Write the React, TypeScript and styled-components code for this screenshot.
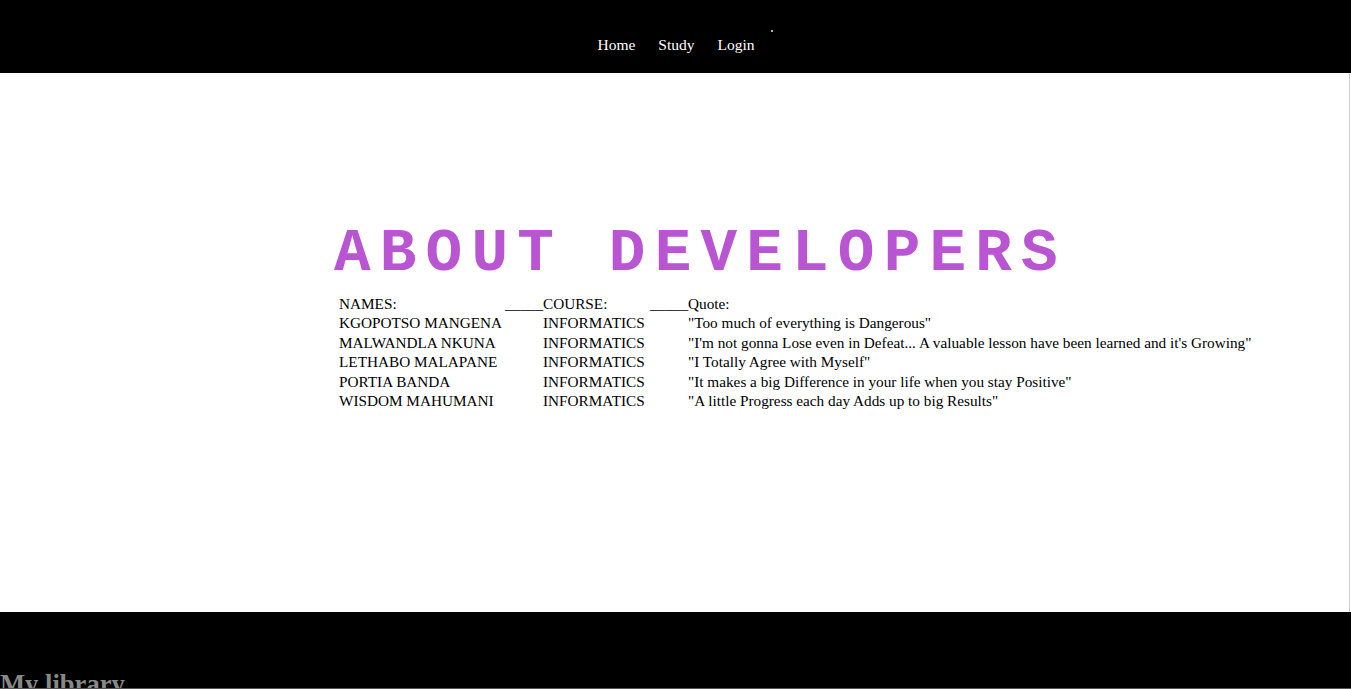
import React from "react";
import styled, { createGlobalStyle } from "styled-components";

const Global = createGlobalStyle`
  html, body { margin: 0; padding: 0; background: #fff; }
  body { font-family: "Liberation Serif", "Times New Roman", serif; font-size: 16px; overflow: hidden; }
`;

const Page = styled.div`
  display: flex;
  flex-direction: column;
  width: 1351px;
  height: 689px;
  overflow: hidden;
`;

const NavBar = styled.nav`
  height: 73px;
  background: #000;
  display: flex;
  justify-content: center;
  align-items: center;
  flex-shrink: 0;
  position: relative;
`;

const NavList = styled.div`
  display: flex;
  gap: 23px;
  padding-top: 16px;
  margin-left: 1px;
`;

const NavLink = styled.a`
  color: #fff;
  text-decoration: none;
  font-size: 15.5px;
  font-family: "Liberation Serif", serif;
`;

const Dot = styled.span`
  position: absolute;
  left: 771px;
  top: 30px;
  width: 2px;
  height: 2px;
  background: #aaa;
`;

const Main = styled.main`
  height: 539px;
  flex-shrink: 0;
  border-right: 1px solid #ccc;
  box-sizing: border-box;
  margin-right: 1px;
  padding-top: 145px;
  padding-left: 334px;
`;

const Title = styled.h1`
  margin: 0;
  font-family: "Liberation Mono", "Courier New", monospace;
  font-weight: bold;
  font-size: 61px;
  letter-spacing: 9.2px;
  line-height: 72px;
  color: #b955d3;
  white-space: pre;
`;

const Table = styled.div`
  display: grid;
  grid-template-columns: 204px 145px auto;
  grid-auto-rows: 19.4px;
  margin-left: 5px;
  margin-top: 4px;
  font-size: 15.25px;
  line-height: 19.4px;
  color: #000;
`;

const Head = styled.div`
  display: flex;
  justify-content: space-between;
  white-space: pre;
`;

const Cell = styled.div`
  white-space: pre;
`;

const Footer = styled.footer`
  flex: 1;
  background: #000;
  display: flex;
  align-items: flex-end;
  border-bottom: 1px solid #555;
  overflow: hidden;
  position: relative;
`;

const FooterTitle = styled.h2`
  margin: 0 0 -11px 0;
  font-family: "Liberation Serif", serif;
  font-weight: bold;
  font-size: 26.6px;
  color: #888;
  line-height: 30px;
`;

const rows = [
  ["KGOPOTSO MANGENA", "INFORMATICS", '"Too much of everything is Dangerous"'],
  ["MALWANDLA NKUNA", "INFORMATICS", '"I\'m not gonna Lose even in Defeat... A valuable lesson have been learned and it\'s Growing"'],
  ["LETHABO MALAPANE", "INFORMATICS", '"I Totally Agree with Myself"'],
  ["PORTIA BANDA", "INFORMATICS", '"It makes a big Difference in your life when you stay Positive"'],
  ["WISDOM MAHUMANI", "INFORMATICS", '"A little Progress each day Adds up to big Results"'],
];

export default function App() {
  return (
    <Page>
      <Global />
      <NavBar>
        <NavList>
          <NavLink href="#">Home</NavLink>
          <NavLink href="#">Study</NavLink>
          <NavLink href="#">Login</NavLink>
        </NavList>
        <Dot />
      </NavBar>
      <Main>
        <Title>ABOUT DEVELOPERS</Title>
        <Table>
          <Head>
            <span>NAMES:</span>
            <span>_____</span>
          </Head>
          <Head>
            <span>COURSE:</span>
            <span>_____</span>
          </Head>
          <Cell>Quote:</Cell>
          {rows.map((r) => (
            <React.Fragment key={r[0]}>
              <Cell>{r[0]}</Cell>
              <Cell>{r[1]}</Cell>
              <Cell>{r[2]}</Cell>
            </React.Fragment>
          ))}
        </Table>
      </Main>
      <Footer>
        <FooterTitle>My library</FooterTitle>
      </Footer>
    </Page>
  );
}
